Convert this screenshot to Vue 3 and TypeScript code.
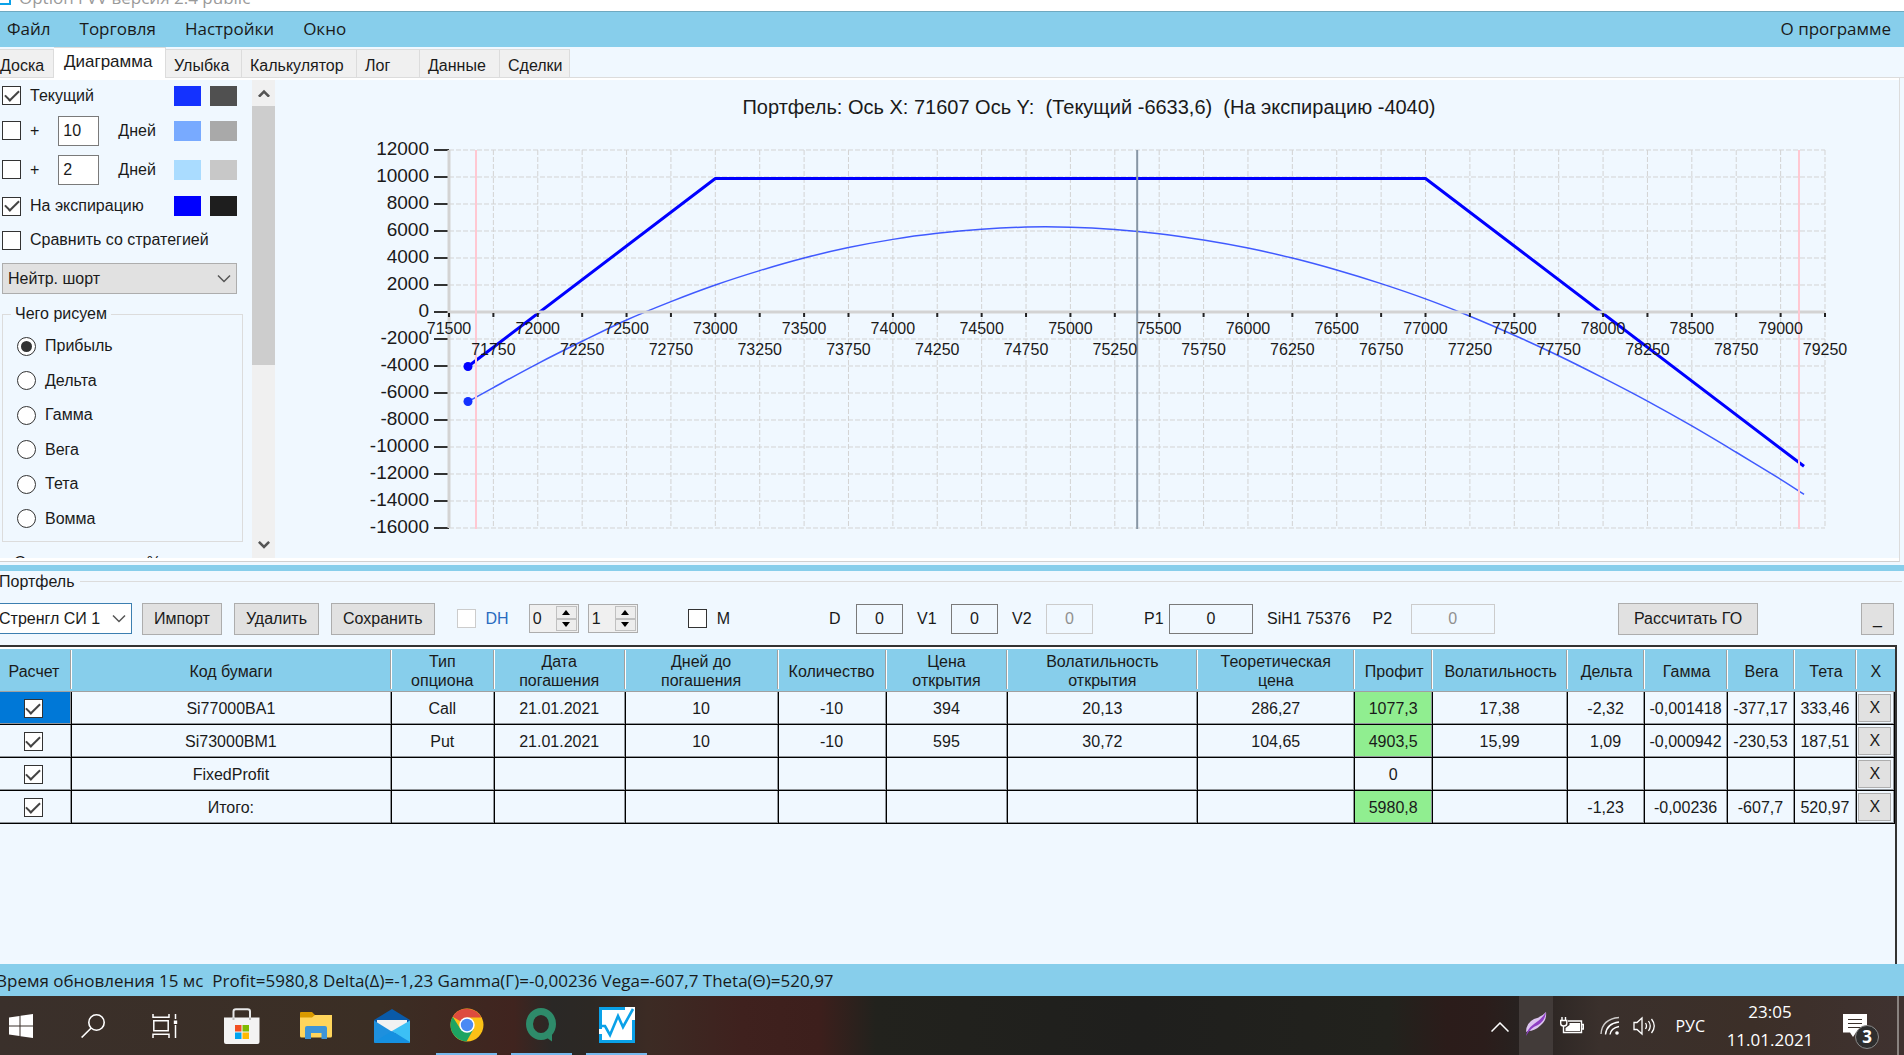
<script setup lang="ts">
import { ref } from 'vue'

const menu = ['Файл', 'Торговля', 'Настройки', 'Окно']

const tabs = [
  { title: 'Доска', width: 54 },
  { title: 'Диаграмма', width: 112 },
  { title: 'Улыбка', width: 76 },
  { title: 'Калькулятор', width: 115 },
  { title: 'Лог', width: 63 },
  { title: 'Данные', width: 80 },
  { title: 'Сделки', width: 70 },
]
const activeTab = ref('Диаграмма')

const modes = ['Прибыль', 'Дельта', 'Гамма', 'Вега', 'Тета', 'Вомма']
const mode = ref('Прибыль')

/* Chart geometry, in the units of the svg view box */
const plot = { left: 172, right: 1548, top: 70, bottom: 448 }
const priceMin = 71500
const priceMax = 79250
const px = (price: number) =>
  plot.left + ((price - priceMin) / (priceMax - priceMin)) * (plot.right - plot.left)
const py = (value: number) =>
  plot.top + ((12000 - value) / 28000) * (plot.bottom - plot.top)

const prices = Array.from({ length: 32 }, (_, i) => priceMin + i * 250)
const levels = Array.from({ length: 15 }, (_, i) => 12000 - i * 2000)

type Point = [number, number]
const expiry: Point[] = [
  [71607, -4040], [73000, 9890], [77000, 9890], [79132, -11430],
]
const current: Point[] = [
  [71607, -6633], [71750, -5595], [72000, -3820], [72250, -2170], [72500, -590],
  [72750, 770], [73000, 2000], [73250, 3065], [73500, 4000], [73750, 4770],
  [74000, 5380], [74250, 5825], [74500, 6130], [74750, 6290], [75000, 6280],
  [75250, 6110], [75500, 5800], [75750, 5330], [76000, 4735], [76250, 3995],
  [76500, 3110], [76750, 2100], [77000, 970], [77250, -310], [77500, -1720],
  [77750, -3240], [78000, -4880], [78250, -6600], [78500, -8440], [78750, -10390],
  [79000, -12390], [79132, -13510],
]
const toPoints = (data: Point[]) =>
  data.map(([x, y]) => `${px(x).toFixed(1)},${py(y).toFixed(1)}`).join(' ')

/* Smooth path through every point (Catmull-Rom turned into Bezier segments) */
const toCurve = (data: Point[]) => {
  const p = data.map(([x, y]) => [px(x), py(y)])
  let d = `M${p[0][0]} ${p[0][1]}`
  for (let i = 0; i < p.length - 1; i++) {
    const a = p[Math.max(i - 1, 0)]
    const b = p[i]
    const c = p[i + 1]
    const e = p[Math.min(i + 2, p.length - 1)]
    d += `C${b[0] + (c[0] - a[0]) / 6} ${b[1] + (c[1] - a[1]) / 6} ${c[0] - (e[0] - b[0]) / 6} ${c[1] - (e[1] - b[1]) / 6} ${c[0]} ${c[1]}`
  }
  return d
}

const columns = [
  { title: 'Расчет', width: 72 },
  { title: 'Код бумаги', width: 320 },
  { title: 'Тип опциона', width: 103 },
  { title: 'Дата погашения', width: 131 },
  { title: 'Дней до погашения', width: 153 },
  { title: 'Количество', width: 108 },
  { title: 'Цена открытия', width: 122 },
  { title: 'Волатильность открытия', width: 190 },
  { title: 'Теоретическая цена', width: 157 },
  { title: 'Профит', width: 78 },
  { title: 'Волатильность', width: 135 },
  { title: 'Дельта', width: 77 },
  { title: 'Гамма', width: 83 },
  { title: 'Вега', width: 67 },
  { title: 'Тета', width: 62 },
  { title: 'X', width: 38 },
]
const total = columns.reduce((sum, c) => sum + c.width, 0)

const rows = [
  ['Si77000BA1', 'Call', '21.01.2021', '10', '-10', '394', '20,13', '286,27', '1077,3', '17,38', '-2,32', '-0,001418', '-377,17', '333,46'],
  ['Si73000BM1', 'Put', '21.01.2021', '10', '-10', '595', '30,72', '104,65', '4903,5', '15,99', '1,09', '-0,000942', '-230,53', '187,51'],
  ['FixedProfit', '', '', '', '', '', '', '', '0', '', '', '', '', ''],
  ['Итого:', '', '', '', '', '', '', '', '5980,8', '', '-1,23', '-0,00236', '-607,7', '520,97'],
]
const isProfit = (cell: string, index: number) => index === 8 && parseFloat(cell) > 0
</script>

<template>
  <div class="screen">
    <header class="titlebar">
      <span class="app-mark"></span>
      <span class="app-title">Option FVV версия 2.4 public</span>
    </header>

    <nav class="menubar">
      <a v-for="item in menu" :key="item" href="#">{{ item }}</a>
      <a class="about" href="#">О программе</a>
    </nav>

    <div class="tabs" role="tablist">
      <button
        v-for="tab in tabs"
        :key="tab.title"
        role="tab"
        :class="{ active: tab.title === activeTab }"
        :style="{ width: tab.width + 'px' }"
        @click="activeTab = tab.title"
      >{{ tab.title }}</button>
    </div>

    <main class="page">
      <aside class="side">
        <div class="options">
          <div class="row first">
            <label><input type="checkbox" checked /><span>Текущий</span></label>
            <i class="swatch now"></i><i class="swatch now-alt"></i>
          </div>
          <div class="row tall">
            <label><input type="checkbox" /><span>+</span></label>
            <input class="days" type="text" value="10" aria-label="Дней" />
            <span class="unit">Дней</span>
            <i class="swatch plus"></i><i class="swatch plus-alt"></i>
          </div>
          <div class="row tall">
            <label><input type="checkbox" /><span>+</span></label>
            <input class="days" type="text" value="2" aria-label="Дней" />
            <span class="unit">Дней</span>
            <i class="swatch next"></i><i class="swatch next-alt"></i>
          </div>
          <div class="row">
            <label><input type="checkbox" checked /><span>На экспирацию</span></label>
            <i class="swatch exp"></i><i class="swatch exp-alt"></i>
          </div>
          <div class="row">
            <label><input type="checkbox" /><span>Сравнить со стратегией</span></label>
          </div>
          <div class="combo strategy">
            <select aria-label="Стратегия"><option>Нейтр. шорт</option></select>
            <svg viewBox="0 0 14 9"><path d="M1 1.5 7 7.5 13 1.5" /></svg>
          </div>
          <fieldset class="modes">
            <legend>Чего рисуем</legend>
            <label v-for="m in modes" :key="m">
              <input v-model="mode" type="radio" name="mode" :value="m" /><span>{{ m }}</span>
            </label>
          </fieldset>
          <p class="cut">Отступ от центра %</p>
        </div>
        <div class="scrollbar">
          <button aria-label="Вверх"><svg viewBox="0 0 14 10"><path d="M1 9 7 3 13 9" /></svg></button>
          <div class="thumb"></div>
          <button class="down" aria-label="Вниз"><svg viewBox="0 0 14 10"><path d="M1 1 7 7 13 1" /></svg></button>
        </div>
      </aside>

      <svg class="chart" viewBox="0 0 1622 478">
        <text class="chart-title" x="812" y="34" text-anchor="middle">Портфель: Ось X: 71607 Ось Y:&#160; (Текущий -6633,6)&#160; (На экспирацию -4040)</text>
        <g class="grid">
          <line v-for="p in prices" :key="p" :x1="px(p)" :x2="px(p)" :y1="plot.top" :y2="plot.bottom" />
          <line v-for="l in levels" :key="l" :x1="plot.left" :x2="plot.right" :y1="py(l)" :y2="py(l)" />
        </g>
        <g class="levels">
          <template v-for="l in levels" :key="l">
            <text x="152" :y="py(l) + 5" text-anchor="end">{{ l }}</text>
            <line x1="157" x2="172" :y1="py(l)" :y2="py(l)" />
          </template>
        </g>
        <path class="line-current" :d="toCurve(current)" />
        <polyline class="line-expiry" :points="toPoints(expiry)" />
        <circle class="dot-current" :cx="px(71607)" :cy="py(-6633)" r="4.5" />
        <circle class="dot-expiry" :cx="px(71607)" :cy="py(-4040)" r="4.5" />
        <g class="axis">
          <line :x1="plot.left" :x2="plot.left" :y1="plot.top" :y2="plot.bottom" />
          <line :x1="plot.left" :x2="plot.right" :y1="py(0)" :y2="py(0)" />
        </g>
        <g class="ticks">
          <line v-for="p in prices" :key="p" :x1="px(p)" :x2="px(p)" y1="233" y2="237" />
        </g>
        <line class="bound" x1="199" x2="199" :y1="plot.top" y2="449" />
        <line class="bound" x1="1522" x2="1522" :y1="plot.top" y2="449" />
        <line class="spot" :x1="px(75376)" :x2="px(75376)" :y1="plot.top" y2="449" />
        <g class="prices">
          <text v-for="(p, i) in prices" :key="p" :x="px(p)" :y="i % 2 ? 275 : 254" text-anchor="middle">{{ p }}</text>
        </g>
      </svg>
    </main>

    <div class="splitter"></div>

    <section class="portfolio">
      <div class="caption"><h2>Портфель</h2></div>
      <div class="toolbar">
        <div class="combo name">
          <select aria-label="Портфель"><option>Стренгл СИ 1</option></select>
          <svg viewBox="0 0 14 9"><path d="M1 1.5 7 7.5 13 1.5" /></svg>
        </div>
        <div class="group actions">
          <button class="btn">Импорт</button>
          <button class="btn">Удалить</button>
          <button class="btn">Сохранить</button>
        </div>
        <label class="check off"><input type="checkbox" disabled /><span>DH</span></label>
        <div class="group spins">
          <div v-for="n in [0, 1]" :key="n" class="spin">
            <input type="text" inputmode="numeric" :value="n" :aria-label="'DH ' + n" />
            <span>
              <button aria-label="Больше"><svg viewBox="0 0 8 5"><path d="M4 0 8 5H0Z" /></svg></button>
              <button aria-label="Меньше"><svg viewBox="0 0 8 5"><path d="M0 0H8L4 5Z" /></svg></button>
            </span>
          </div>
        </div>
        <label class="check market"><input type="checkbox" /><span>M</span></label>
        <div class="group fields">
          <label class="field"><span>D</span><input type="text" value="0" /></label>
          <label class="field wide-label"><span>V1</span><input type="text" value="0" /></label>
          <label class="field wide-label"><span>V2</span><input type="text" value="0" disabled /></label>
        </div>
        <div class="group futures">
          <label class="field price"><span>P1</span><input type="text" value="0" /></label>
          <span>SiH1 75376</span>
          <label class="field price second"><span>P2</span><input type="text" value="0" disabled /></label>
        </div>
        <button class="btn margin">Рассчитать ГО</button>
        <button class="btn mini">_</button>
      </div>

      <div class="table-box">
        <table>
          <colgroup>
            <col v-for="c in columns" :key="c.title" :style="{ width: (c.width / total) * 100 + '%' }" />
          </colgroup>
          <thead>
            <tr><th v-for="c in columns" :key="c.title" scope="col">{{ c.title }}</th></tr>
          </thead>
          <tbody>
            <tr v-for="(row, r) in rows" :key="row[0]">
              <td class="pick" :class="{ selected: r === 0 }"><input type="checkbox" checked :aria-label="row[0]" /></td>
              <td v-for="(cell, i) in row" :key="i" :class="{ profit: isProfit(cell, i) }">{{ cell }}</td>
              <td class="remove"><button>X</button></td>
            </tr>
          </tbody>
        </table>
      </div>
    </section>

    <div class="status">Время обновления 15 мс&nbsp; Profit=5980,8 Delta(Δ)=-1,23 Gamma(Γ)=-0,00236 Vega=-607,7 Theta(Θ)=520,97</div>

    <footer class="taskbar">
      <div class="apps">
        <button class="small" aria-label="Пуск">
          <svg width="24" height="24" viewBox="0 0 24 24" fill="#fff"><path d="M0 3.4 10.5 2V11.5H0ZM11.5 1.8 24 0V11.5H11.5ZM0 12.5H10.5V22L0 20.6ZM11.5 12.5H24V24L11.5 22.2Z" /></svg>
        </button>
        <button aria-label="Поиск">
          <svg width="24" height="24" viewBox="0 0 24 24" fill="none" stroke="#fff" stroke-width="1.6"><circle cx="15.5" cy="8.5" r="7.7" /><path d="M10.2 14 .6 23.5" /></svg>
        </button>
        <button aria-label="Просмотр задач">
          <svg width="26" height="24" viewBox="0 0 26 24" fill="none" stroke="#fff" stroke-width="1.5"><path d="M1 0V3.2H17V0M1 24V20.2H17V24M1.8 6.8H16.2V16.8H1.8ZM23.5 0V5M23.5 11V24" /><path d="M21.8 6.5H25.2V10H21.8Z" fill="#fff" stroke="none" /></svg>
        </button>
        <button class="wide store" aria-label="Магазин">
          <svg width="36" height="36" viewBox="0 0 36 36"><path d="M9.500 12V3.500Q9.500 1.200 12 1.200H23.500Q26 1.200 26 3.500V12" fill="none" stroke="#e8e8e8" stroke-width="2" /><path d="M0 9.500H35.500V34Q35.500 36 33.500 36H2Q0 36 0 34Z" fill="#f3f3f3" /><path d="M9.500 9.500V12M26 9.500V12" stroke="#bbb" stroke-width="2" /><path d="M11 17H17.500V23.500H11Z" fill="#f25022" /><path d="M18.500 17H25V23.500H18.500Z" fill="#7fba00" /><path d="M11 24.500H17.500V31H11Z" fill="#00a4ef" /><path d="M18.500 24.500H25V31H18.500Z" fill="#ffb900" /></svg>
        </button>
        <button class="wide" aria-label="Проводник">
          <svg width="33" height="28" viewBox="0 0 33 28"><path d="M0 1Q0 0 1 0H12L15 3H32V12H0Z" fill="#d99a00" /><path d="M0 5.500H12L15 3H32V24Q32 25.500 30.500 25.500H1.500Q0 25.500 0 24Z" fill="#ffd55c" /><path d="M5 27V16Q5 14 7 14H25Q27 14 27 16V27H21.500V21H11V27Z" fill="#3e95d8" /></svg>
        </button>
        <button class="wide" aria-label="Почта">
          <svg width="36" height="34" viewBox="0 0 36 34"><path d="M0 11 18 0 36 11V14H0Z" fill="#0a5aa8" /><path d="M3 11H33V20L18 25 3 20Z" fill="#f2f2f2" /><path d="M0 11.500 36 34H1.500Q0 34 0 32.500Z" fill="#1e90de" /><path d="M36 11.500V32.500Q36 34 34.500 34L18 22Z" fill="#3cc0f5" /><path d="M18 22 0 33Q.5 34 1.500 34H34.500Q35.500 34 36 33Z" fill="#1590e0" /></svg>
        </button>
        <button class="wide open" aria-label="Chrome">
          <svg width="34" height="34" viewBox="0 0 34 34"><circle cx="17" cy="17" r="16.500" fill="#fbc116" /><path d="M17 17 2.700 8.700A16.500 16.500 0 0 1 31.300 9.500H17Z" fill="#dd4b3e" /><path d="M2.700 8.700A16.500 16.500 0 0 0 16.500 33.500L23.500 21 10.500 21Z" fill="#1da462" /><circle cx="17" cy="17" r="7.700" fill="#fff" /><circle cx="17" cy="17" r="6.200" fill="#4a8af4" /></svg>
        </button>
        <button class="wide open" aria-label="QUIK">
          <svg width="32" height="34" viewBox="0 0 32 34"><ellipse cx="15" cy="16" rx="11.500" ry="12.500" fill="none" stroke="#2e8b6a" stroke-width="7" /><path d="M17 27 26 33.500V22Z" fill="#2e8b6a" /></svg>
        </button>
        <button class="wide open" aria-label="Option">
          <svg width="36" height="36" viewBox="0 0 36 36"><path d="M0 0H36V36H0Z" fill="#fff" /><path d="M1.500 22V1.500H26M34.500 13V34.500H1.500V27" fill="none" stroke="#0aa1e8" stroke-width="3" /><path d="M0 19H6L11 28 19 9 24 20 34 2" fill="none" stroke="#0aa1e8" stroke-width="2.600" /></svg>
        </button>
      </div>

      <div class="tray">
        <button aria-label="Скрытые значки">
          <svg width="18" height="10" viewBox="0 0 18 10" fill="none" stroke="#fff" stroke-width="1.500"><path d="M.5 9.500 9 1 17.500 9.500" /></svg>
        </button>
        <button class="feather" aria-label="Перо">
          <svg width="22" height="24" viewBox="0 0 22 24"><path d="M1 20Q1 11 9 7 17 5 21 0 22 8 16 13 10 19 3 19Z" fill="#dcc4f0" /><path d="M1 24Q2 17 9 12 17 7 21 0 20 9 13 13 5 16 1 24Z" fill="#8e3fc4" /></svg>
        </button>
        <svg class="battery" width="24" height="18" viewBox="0 0 24 18" fill="none" stroke="#fff" stroke-width="1.400"><path d="M8 4H21.500V15.500H3.500V9M21.500 7.500H23.300V12H21.500" /><path d="M9.500 6H20V14H5.500V11L9.500 8Z" fill="#fff" stroke="none" /><path d="M.7 3.500H6.800V6.500Q6.800 9 3.700 9 .7 9 .7 6.500ZM2 0V3M5.500 0V3" fill="#3a302b" /></svg>
        <svg class="wifi" width="20" height="20" viewBox="0 0 20 20" fill="none" stroke="#fff" stroke-width="1.400"><path d="M1 18Q2 3 19 1.500" opacity=".75" /><path d="M5.500 18.500Q6.500 7.500 19 6" /><path d="M10 18.500Q11 12 19 10.500" /><circle cx="17" cy="17" r="1.800" fill="#fff" stroke="none" /></svg>
        <svg class="sound" width="24" height="20" viewBox="0 0 24 20" fill="none" stroke="#fff" stroke-width="1.300"><path d="M1 6.500H4L9 2V18L4 13.500H1Z" /><path d="M12.500 7Q14.500 10 12.500 13M15.500 5Q19 10 15.500 15M18.500 3Q24 10 18.500 17" /></svg>
        <span class="lang">РУС</span>
        <div class="clock"><time>23:05</time><time>11.01.2021</time></div>
        <button class="notes" aria-label="Уведомления">
          <svg width="24" height="24" viewBox="0 0 24 24"><path d="M0 0H24V18.500H13L10 23 7 18.500H0Z" fill="#fff" /><path d="M5 5.500H19M5 9.500H19M5 13.500H19" stroke="#3a302b" stroke-width="1.200" /></svg>
          <b>3</b>
        </button>
      </div>
    </footer>
  </div>
</template>

<style>
body {
  margin: 0;
}
</style>

<style scoped>
* {
  box-sizing: border-box;
}
.screen {
  display: flex;
  flex-direction: column;
  min-height: 100vh;
  overflow: hidden;
  background: #f0f8ff;
  color: #1a1a1a;
  font: 16px/20px "Liberation Sans", Arial, sans-serif;
}
button,
input,
select {
  font: inherit;
  color: inherit;
  margin: 0;
  padding: 0;
  border-radius: 0;
}

/* Window frame */
.titlebar {
  display: flex;
  align-items: flex-end;
  gap: 8px;
  height: 11px;
  overflow: hidden;
  background: #fff;
}
.app-mark {
  width: 11px;
  height: 20px;
  margin-bottom: 6px;
  border: 2px solid #0aa1e8;
  border-left: 0;
}
.app-title {
  margin-bottom: 3px;
  color: #9a9a9a;
  font-family: "Open Sans", "Noto Sans", sans-serif;
  font-size: 17px;
}
.menubar {
  display: flex;
  align-items: center;
  gap: 29px;
  height: 36px;
  padding: 0 13px 2px 7px;
  border-top: 1px solid #6fa9c0;
  background: #87ceeb;
  font: 17px/24px "Open Sans", "Noto Sans", sans-serif;
}
.menubar a {
  color: inherit;
  text-decoration: none;
}
.about {
  margin-left: auto;
}

/* Tabs */
.tabs {
  display: flex;
  align-items: flex-end;
  height: 31px;
  border-bottom: 1px solid #dcdcdc;
}
.tabs button {
  height: 28px;
  padding: 4px 0 0 8px;
  border: 1px solid #dcdcdc;
  border-width: 1px 1px 0 0;
  background: #f0f0f0;
  text-align: left;
  white-space: nowrap;
}
.tabs button:first-child {
  padding-left: 0;
}
.tabs .active {
  height: 31px;
  margin-bottom: -1px;
  padding: 0 0 2px 10px;
  background: #fff;
  font-size: 17px;
}

/* Chart page */
.page {
  display: flex;
  height: 484px;
  margin-right: 4px;
  padding-top: 2px;
  border: 1px solid #dcdcdc;
  border-width: 0 1px 1px 0;
  border-bottom-color: #d0d0d0;
  box-shadow: inset 0 2px #fff, inset 0 -3px #fff;
}
.side {
  display: flex;
  flex: none;
  width: 277px;
  height: 478px;
  overflow: hidden;
}
.options {
  width: 252px;
  padding: 0 15px 0 2px;
}
.row {
  display: flex;
  align-items: center;
  height: 34px;
}
.row label {
  display: flex;
  align-items: center;
  gap: 9px;
  margin-right: auto;
}
.first {
  height: 31px;
}
.tall {
  height: 39px;
}
.tall label {
  margin-right: 19px;
}
input[type="checkbox"],
input[type="radio"] {
  display: inline-grid;
  place-items: center;
  flex: none;
  width: 19px;
  height: 19px;
  border: 1px solid #333;
  background: #fff;
  appearance: none;
}
input[type="checkbox"]:checked::before {
  width: 12px;
  height: 6px;
  margin-top: -4px;
  border: solid #444;
  border-width: 0 0 2px 2px;
  transform: rotate(-45deg);
  content: "";
}
input[type="checkbox"]:disabled {
  border-color: #ccc;
}
input[type="radio"] {
  border-radius: 50%;
}
input[type="radio"]:checked::before {
  width: 11px;
  height: 11px;
  border-radius: 50%;
  background: #333;
  content: "";
}
.days {
  width: 41px;
  height: 30px;
  padding-left: 4px;
  border: 1px solid #7a7a7a;
  background: #fff;
}
.unit {
  margin: 0 auto 0 19px;
}
.swatch {
  width: 27px;
  height: 20px;
  margin-left: 9px;
}
.now { background: #1432ff; }
.now-alt { background: #505050; }
.plus { background: #78aaff; }
.plus-alt { background: #a9a9a9; }
.next { background: #aadcff; }
.next-alt { background: #c8c8c8; }
.exp { background: #00f; }
.exp-alt { background: #1e1e1e; }

.combo {
  position: relative;
}
.combo select {
  display: block;
  width: 100%;
  height: 31px;
  padding: 0 28px 0 5px;
  border: 1px solid #adadad;
  background: #e1e1e1;
  appearance: none;
}
.combo svg {
  position: absolute;
  top: 11px;
  right: 6px;
  width: 14px;
  fill: none;
  stroke: #555;
  stroke-width: 1.500;
  pointer-events: none;
}
.strategy {
  margin-top: 6px;
}
.modes {
  display: flex;
  flex-direction: column;
  width: 241px;
  height: 238px;
  margin: 10px 0 0;
  padding: 5px 0 5px 14px;
  border: 1px solid #dcdcdc;
}
.modes legend {
  padding: 0 4px;
  margin-left: -6px;
}
.modes label {
  display: flex;
  flex: 1;
  align-items: center;
  gap: 9px;
}
.cut {
  margin: 11px 0 0 12px;
  white-space: nowrap;
}
.scrollbar {
  display: flex;
  flex-direction: column;
  width: 23px;
  background: #f0f0f0;
}
.scrollbar button {
  display: grid;
  place-items: center;
  height: 26px;
  border: 0;
  background: none;
}
.scrollbar svg {
  width: 12px;
  fill: none;
  stroke: #555;
  stroke-width: 3;
}
.thumb {
  height: 259px;
  background: #cdcdcd;
}
.down {
  margin-top: auto;
}

.chart {
  flex: 1;
  min-width: 0;
  height: 478px;
}
.chart text {
  fill: #1a1a1a;
}
.chart-title {
  font-size: 20px;
}
.grid line {
  stroke: #d3d3d3;
  stroke-dasharray: 5 2;
}
.levels {
  font-size: 19px;
}
.levels line {
  stroke: #333;
  stroke-width: 2;
}
.prices {
  font-size: 16px;
}
.line-current {
  fill: none;
  stroke: #1432ff;
  stroke-opacity: .8;
  stroke-width: 1.500;
}
.line-expiry {
  fill: none;
  stroke: #00f;
  stroke-width: 3;
  stroke-linejoin: round;
}
.dot-current {
  fill: #1432ff;
}
.dot-expiry {
  fill: #00f;
}
.axis line {
  stroke: #d3d3d3;
  stroke-width: 3;
}
.ticks line {
  stroke: #222;
  stroke-width: 2;
}
.bound {
  stroke: #ffc8d2;
  stroke-width: 2;
}
.spot {
  stroke: #8796a5;
  stroke-width: 2;
}
.splitter {
  height: 6px;
  margin-top: 3px;
  background: #87ceeb;
}

/* Portfolio */
.portfolio {
  display: flex;
  flex: 1;
  flex-direction: column;
}
.caption {
  display: flex;
  align-items: center;
  gap: 6px;
  height: 21px;
}
.caption::after {
  flex: 1;
  height: 1px;
  margin-right: 2px;
  background: #dcdcdc;
  content: "";
}
h2 {
  margin: 0 0 0 -1px;
  font: inherit;
}
.toolbar {
  display: flex;
  align-items: center;
  height: 53px;
  padding-right: 10px;
  white-space: nowrap;
}
.group {
  display: flex;
  align-items: center;
}
.name {
  width: 134px;
  margin-left: -2px;
}
.name select {
  padding-left: 0;
  border-color: #3c7fb1;
  background: #fff;
}
.actions {
  gap: 12px;
  margin-left: 10px;
}
.btn {
  height: 32px;
  padding: 0 11px;
  border: 1px solid #adadad;
  background: #e1e1e1;
}
.check {
  display: flex;
  align-items: center;
  gap: 10px;
}
.off {
  margin: 0 20px 0 22px;
  color: #2a6cc0;
}
.spins {
  gap: 9px;
}
.spin {
  display: flex;
  width: 50px;
  height: 29px;
  border: 1px solid #adadad;
  background: #f0f0f0;
}
.spin input {
  width: 25px;
  padding-left: 3px;
  border: 0;
  background: none;
}
.spin span {
  display: flex;
  flex: 1;
  flex-direction: column;
  padding: 1px;
}
.spin button {
  display: grid;
  flex: 1;
  place-items: center;
  border: 1px solid #c0c0c0;
  background: #ededed;
}
.spin svg {
  width: 8px;
  height: 5px;
}
.market {
  margin-left: 50px;
}
.fields {
  gap: 14px;
  margin-left: 99px;
}
.field {
  display: flex;
  align-items: center;
}
.field span {
  width: 27px;
}
.field input {
  width: 47px;
  height: 30px;
  border: 1px solid #7a7a7a;
  background: none;
  text-align: center;
}
.field input:disabled {
  border-color: #ccc;
  color: #909090;
}
.wide-label span {
  width: 34px;
}
.futures {
  gap: 14px;
  margin-left: 51px;
}
.price span {
  width: 25px;
}
.price input {
  width: 84px;
}
.second span {
  width: 38px;
}
.second {
  margin-left: 8px;
}
.margin {
  width: 140px;
  margin: 0 103px 0 auto;
}
.mini {
  width: 33px;
}
.table-box {
  flex: 1;
  margin-right: 7px;
  border: solid #333;
  border-width: 2px 2px 0 0;
}
table {
  width: 100%;
  border-collapse: separate;
  border-spacing: 0;
  table-layout: fixed;
}
th,
td {
  padding: 2px 1px 0 0;
  font-weight: 400;
  text-align: center;
  white-space: nowrap;
}
thead tr {
  background: linear-gradient(#fff, #fff) top / 100% 2px no-repeat #87ceeb;
}
th {
  height: 45px;
  padding: 4px 9px 0 7px;
  border-bottom: 1px solid #a0a0a0;
  background: linear-gradient(#a0a0a0, #a0a0a0) right 1px center / 1px 39px no-repeat,
    linear-gradient(#fff, #fff) right center / 1px 39px no-repeat;
  line-height: 19px;
  white-space: normal;
}
th:first-child {
  padding: 4px 4px 0 0;
}
th:nth-child(n + 10) {
  padding: 4px 0 0;
}
th:last-child {
  background: none;
}
td {
  height: 33px;
  border: solid #000;
  border-width: 0 1px 1px 0;
  box-shadow: inset -1px -1px #90959a;
}
td input[type="checkbox"] {
  vertical-align: middle;
}
.pick {
  padding: 0 4px 0 0;
}
.selected {
  background: #0078d7;
}
.profit {
  background: #90ee90;
}
.remove {
  padding: 0 1px 0 0;
}
.remove button {
  width: 33px;
  height: 28px;
  border: 1px solid #adadad;
  background: #e1e1e1;
  vertical-align: middle;
}
.status {
  height: 32px;
  padding-top: 1px;
  overflow: hidden;
  background: #87ceeb;
  font: 17px/32px "Open Sans", "Noto Sans", sans-serif;
  text-indent: -4px;
  white-space: nowrap;
}

/* Taskbar */
.taskbar {
  display: flex;
  justify-content: space-between;
  height: 59px;
  background: linear-gradient(90deg, #3a302b, #3b2e24 20%, #40241f 27%, #2a2826 29%, #2c2824 31%, #3c2b24 34%, #3f211e 39%, #3d1f1c 43%, #22221d 46%, #1f1f1d 60%, #22221d 73%, #2b1c1a 76%, #2b1d1b 78%, #272220 80%, #3a302c 84%, #3c2f28 92%, #3f3230);
  color: #fff;
  font-family: "Open Sans", "Noto Sans", sans-serif;
}
.taskbar button {
  border: 0;
  background: none;
}
.apps,
.tray {
  display: flex;
  align-items: center;
}
.apps button {
  display: grid;
  place-items: center;
  width: 72px;
  height: 100%;
}
.apps .small {
  width: 57px;
  padding-right: 15px;
}
.apps .wide {
  width: 61px;
  margin-left: 14px;
}
.apps .store {
  margin-left: 10px;
}
.apps .open {
  border-bottom: 2px solid #76b9ed;
}
.tray {
  padding-right: 6px;
  border-right: 2px solid #8a8380;
  margin-right: 5px;
}
.tray .feather {
  width: 34px;
  height: 100%;
  margin: 0 7px 0 10px;
  background: #423b39;
}
.wifi {
  margin: 0 13px 0 16px;
}
.lang {
  margin: 0 20px 0 18px;
}
.clock {
  display: flex;
  flex-direction: column;
  width: 90px;
  text-align: center;
  font-size: 17px;
  line-height: 28px;
}
.tray .notes {
  position: relative;
  width: 30px;
  height: 24px;
  margin: 0 18px 0 28px;
  text-align: left;
}
.notes b {
  position: absolute;
  top: 11px;
  left: 12px;
  width: 24px;
  height: 24px;
  border: 1px solid #8a8a8a;
  border-radius: 50%;
  background: #2e2e2e;
  font-size: 17px;
  line-height: 22px;
  text-align: center;
}
</style>
